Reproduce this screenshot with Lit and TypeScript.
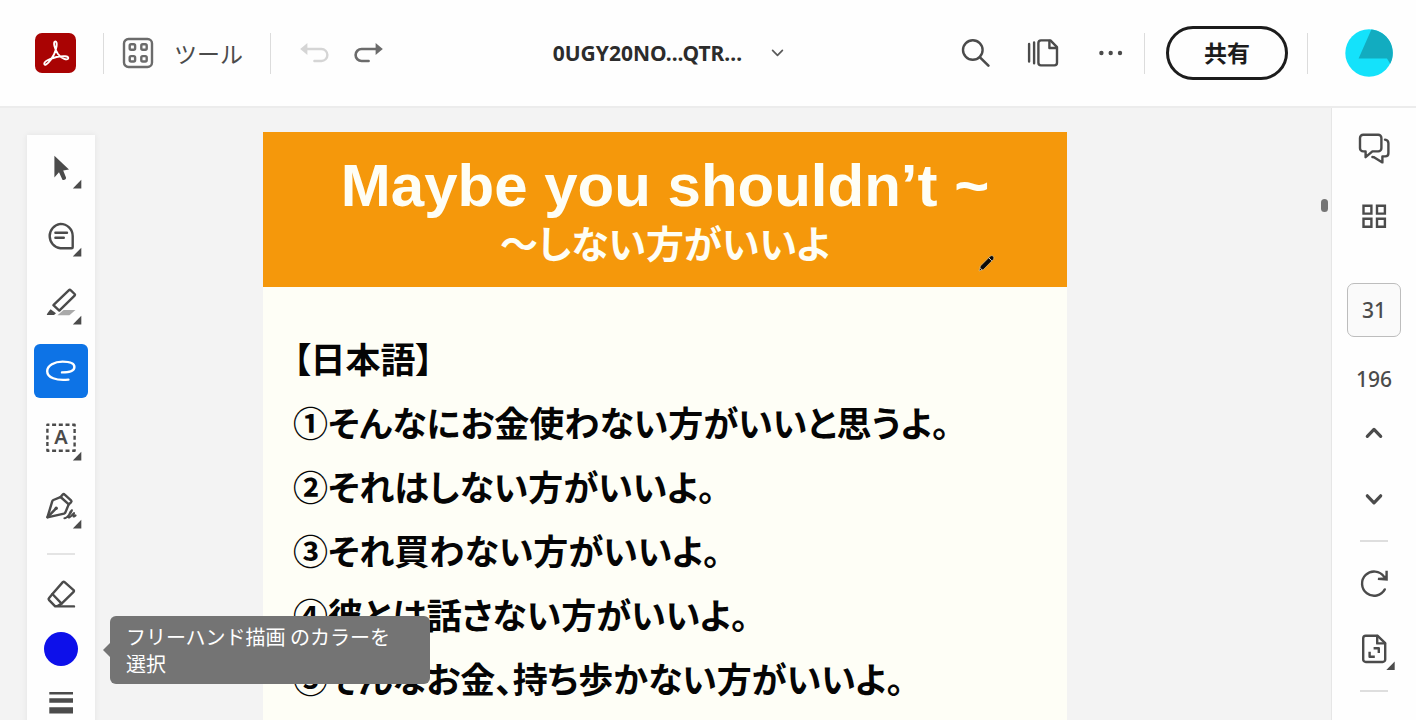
import { LitElement, html, svg, css } from "lit";
import { customElement, state } from "lit/decorators.js";
import { classMap } from "lit/directives/class-map.js";

const corner = svg`<path class="solid" d="M47.3 39.8V48.4H38.8Z"/>`;

const glyphs: Record<string, unknown> = {
  select: svg`<path class="solid" d="M20.4 15.8 35 29.6 29.2 30.4 32 37.6Q32.4 38.8 31.2 39.4L29.8 40Q28.6 40.4 28.2 39.2L25 32.2 20.4 37.4Z"/>${corner}`,
  comment: svg`<path d="M26.4 15.9A12.3 12.3 0 0 0 26.4 40.3H37.6A1.1 1.1 0 0 0 38.7 39.2V28.1A12.3 12.3 0 0 0 26.4 15.9Z"/><path d="M21.4 24.8H33M21.4 29.8H29.8"/>${corner}`,
  highlight: svg`<path d="M35 14.2Q35.8 13.4 36.6 14.2L40.6 18Q41.4 18.8 40.6 19.6L25.3 34.6 19.4 29.2Z"/><path class="solid" d="M12.8 39Q12.6 37.8 16.6 33.2L22 37.2 20 39Z"/><path class="pale" d="M29.6 34H41.5L35.4 39.2H23.4Z"/>${corner}`,
  draw: svg`<path d="M34.4 35.6C22 37 13.2 33.4 13.2 27.2C13.2 21.4 20.5 17.6 28.6 17.6C35.8 17.6 40.4 19.6 40.4 22.9C40.4 26.6 35 28.4 28 28.4"/>`,
  textbox: svg`<rect x="13.4" y="12.8" width="27.2" height="26" stroke-dasharray="4 2.7" stroke-linecap="butt" stroke-dashoffset="2"/><text x="27" y="32" text-anchor="middle">A</text>${corner}`,
  sign: svg`<path d="M28.7 14.6Q29.7 13.6 30.7 14.6L37 20.4Q38 21.4 37 22.4L34.8 24.4 26.6 17Z"/><path d="M26.4 17.2 19.4 20Q18.6 20.4 18.3 21.2L13.4 37.4 30 33.6Q31 33.2 31.4 32.4L34.6 24.6"/><path d="M13.6 37.2 21.6 28.8"/><circle class="solid" cx="22.2" cy="28.2" r="1.7"/><path stroke-width="2" d="M30.4 38.2C34 38.2 38.6 30 37.8 30.2C36 31.6 33.4 38 35.2 37.6C37.4 36.8 40.4 31.8 40 33.4C39.2 36 38.8 38 41.6 35.4"/>${corner}`,
  erase: svg`<path d="M28.8 14.1Q29.7 13.3 30.6 14.1L39.6 22.2Q40.4 23 39.6 23.8L27.6 35.6 18.4 26Z"/><path d="M18.4 26 14.9 30.2Q14.2 31 14.9 31.8L21.2 38.3H23.2L27.6 35.6M21.4 38.4H40"/>`,
  lines: svg`<path class="solid" d="M15.3 16H39V18.4H15.3ZM15.3 22.3H39V26.7H15.3ZM15.3 31.3H39V37.4H15.3Z"/>`,
  chat: svg`<path d="M16.2 13.7H31.2A3.2 3.2 0 0 1 34.4 16.9V27.2A3.2 3.2 0 0 1 31.2 30.4H25.4L18.6 36.2V30.4H16.2A3.2 3.2 0 0 1 13 27.2V16.9A3.2 3.2 0 0 1 16.2 13.7Z"/><path d="M38 18.6Q41.4 19 41.4 22.2V32.2Q41.4 35.4 38.2 35.4H35.4V41.4L27.4 36.4Q26.6 36 25.4 36"/>`,
  thumbs: svg`<path stroke-linejoin="miter" d="M16.5 16.7H24.4V24.6H16.5ZM30 16.7H37.9V24.6H30ZM16.5 29.8H24.4V37.7H16.5ZM30 29.8H37.9V37.7H30Z"/>`,
  up: svg`<path class="bold" d="M20.3 30.4 27 23.4 33.7 30.4"/>`,
  down: svg`<path class="bold" d="M20.3 23.8 27 30.8 33.7 23.8"/>`,
  rotate: svg`<path d="M37.8 33.4A12.1 12.1 0 1 1 37 20.6"/><path class="solid" d="M38.4 14.8H40.8V24.8L30.8 24 31 21.8 36.2 21.6 38.4 19.4Z"/>`,
  fit: svg`<path d="M18.8 13.7H30.4L38.2 21.2V37.4A2.6 2.6 0 0 1 35.6 40H18.8A2.6 2.6 0 0 1 16.2 37.4V16.3A2.6 2.6 0 0 1 18.8 13.7Z"/><path d="M30.2 14V21.4H38"/><path stroke-linecap="butt" d="M26.6 26.2H31.8V31M22.6 29.8V34.8H27.8"/><path class="solid" d="M47.7 39.6V48H39.3Z"/>`,
};

const glyph = (name: string) => html`<svg class="glyph" viewBox="0 0 54 54" aria-hidden="true">${glyphs[name]}</svg>`;

const sharedIcon = css`
  * { box-sizing: border-box; }
  button {
    font: inherit;
    color: inherit;
    background: none;
    border: 0;
    padding: 0;
    margin: 0;
    cursor: pointer;
  }
  svg { display: block; flex: none; fill: none; stroke: currentColor; stroke-width: 2.4; stroke-linecap: round; stroke-linejoin: round; }
  .glyph { width: 54px; height: 54px; }
  .solid { fill: currentColor; stroke: none; }
  .pale { fill: #a9a9a9; stroke: none; }
  .bold { stroke-width: 3.2; }
  text { fill: currentColor; stroke: none; font: 600 20px "Noto Sans", sans-serif; }
`;

@customElement("top-bar")
class TopBar extends LitElement {
  static styles = [sharedIcon, css`
    :host {
      display: flex;
      align-items: center;
      justify-content: space-between;
      height: 108px;
      padding: 0 23px 0 35px;
      background: #fefefe;
      border-bottom: 2px solid #ececec;
      color: #4b4b4b;
      font-family: "Noto Sans", "Noto Sans CJK JP", sans-serif;
    }
    .group { display: flex; align-items: center; }
    .rule { width: 1px; height: 41px; margin-right: 1px; background: #dcdcdc; }
    .tools { display: flex; align-items: center; gap: 20px; font-size: 23px; line-height: 32px; margin: 0 27px 0 17px; }
    .tools svg { color: #6b6b6b; }
    .label { font-family: "Noto Sans CJK JP", sans-serif; font-weight: 400; }
    .logo { margin-right: 27px; }
    .undo { color: #d5d5d5; margin: 0 25px 0 28px; }
    .redo { color: #6b6b6b; }
    .doc { display: flex; align-items: center; gap: 29px; margin-right: 7px; color: #2c2c2c; font-size: 21px; line-height: 32px; font-weight: 700; }
    .search { margin-right: 37px; }
    .pages { margin-right: 39px; }
    .more { margin-right: 21px; }
    .share {
      margin: 0 19px 0 20px;
      width: 122px;
      height: 54px;
      padding-bottom: 2px;
      border: 3px solid #1c1c1c;
      border-radius: 27px;
      color: #1c1c1c;
      font: 700 23px/32px "Noto Sans CJK JP", sans-serif;
    }
    .avatar { margin-left: 36px; }
  `];

  render() {
    return html`
      <div class="group">
        <button class="logo" aria-label="Adobe Acrobat">
          <svg width="41" height="40" viewBox="0 0 41 40">
            <rect width="41" height="40" rx="7" fill="#a90303" stroke="none"/>
            <path stroke="#fff" stroke-width="1.9" d="M9.4 31.2C8.4 28.6 14.6 25.6 21.6 24C28 22.6 34 22.8 33.2 25.4C32.4 27.6 26.8 26 23 21C20 16.8 17.6 8.8 20.2 8.4C23 8.6 21.6 16 18.8 21.8C15.6 28 10.6 33.4 9.4 31.2Z"/>
          </svg>
        </button>
        <span class="rule"></span>
        <button class="tools">
          <svg width="32" height="32" viewBox="0 0 32 32">
            <rect x="2" y="2" width="28" height="28" rx="4.5"/>
            <rect x="7.7" y="7.3" width="5.4" height="5.4" rx="1.4"/>
            <rect x="19.3" y="7.3" width="5.4" height="5.4" rx="1.4"/>
            <rect x="7.7" y="19.1" width="5.4" height="5.4" rx="1.4"/>
            <rect x="19.3" y="19.1" width="5.4" height="5.4" rx="1.4"/>
          </svg>
          <span class="label">ツール</span>
        </button>
        <span class="rule"></span>
        <button class="undo" aria-label="元に戻す">
          <svg width="29" height="20" viewBox="0 0 29 20">
            <path d="M7 6H21.4A6 6 0 0 1 21.4 18H14.4"/><path class="solid" d="M.2 6 7.4 0V12Z"/>
          </svg>
        </button>
        <button class="redo" aria-label="やり直し">
          <svg width="29" height="20" viewBox="0 0 29 20">
            <path stroke-width="2.6" d="M22 6H7.6A6 6 0 0 0 7.6 18H14.6"/><path class="solid" d="M28.8 6 21.6 0V12Z"/>
          </svg>
        </button>
      </div>
      <button class="doc">
        <span>0UGY20NO...QTR…</span>
        <svg width="13" height="8" viewBox="0 0 13 8"><path stroke="#5a5a5a" stroke-width="1.7" d="M1.6 1.4 6.5 6.3 11.4 1.4"/></svg>
      </button>
      <div class="group">
        <button class="search" aria-label="検索">
          <svg width="29" height="28" viewBox="0 0 29 28"><circle cx="11.8" cy="11" r="9.8"/><path stroke-width="2.6" d="M19 18.4 27.4 26.6"/></svg>
        </button>
        <button class="pages" aria-label="ページ">
          <svg width="32" height="28" viewBox="0 0 32 28">
            <path d="M2.1 5V22.6M7.1 3.4V24.2"/>
            <path d="M14 1.4H23.4L30 8.2V23.8A2.6 2.6 0 0 1 27.4 26.4H14A2.6 2.6 0 0 1 11.4 23.8V4A2.6 2.6 0 0 1 14 1.4Z"/>
            <path d="M22.4 2V9H29.6"/>
          </svg>
        </button>
        <button class="more" aria-label="その他">
          <svg width="25" height="6" viewBox="0 0 25 6"><g class="solid"><circle cx="3.4" cy="3" r="2.2"/><circle cx="12.7" cy="3" r="2.2"/><circle cx="22" cy="3" r="2.2"/></g></svg>
        </button>
        <span class="rule"></span>
        <button class="share">共有</button>
        <span class="rule"></span>
        <button class="avatar" aria-label="アカウント">
          <svg width="48" height="48" viewBox="0 0 48 48" stroke="none">
            <circle cx="24" cy="24" r="23.7" fill="#14e2fb" stroke="none"/>
            <path fill="#12acc0" stroke="none" d="M26.4.4A23.7 23.7 0 0 1 45.2 34.8L42 29.4H13.6Z"/>
          </svg>
        </button>
      </div>`;
  }
}

@customElement("tool-rail")
class ToolRail extends LitElement {
  @state() active = "draw";

  tools: [string, string][] = [
    ["select", "選択"],
    ["comment", "コメントを追加"],
    ["highlight", "ハイライト"],
    ["draw", "フリーハンド描画"],
    ["textbox", "テキストを追加"],
    ["sign", "署名"],
  ];

  static styles = [sharedIcon, css`
    :host {
      display: flex;
      flex-direction: column;
      align-items: center;
      width: 68px;
      padding-top: 5px;
      background: #fefefe;
      box-shadow: 0 0 6px rgba(0, 0, 0, .07);
      color: #4b4b4b;
      z-index: 1;
    }
    .tools { display: flex; flex-direction: column; gap: 14px; }
    button { width: 54px; height: 54px; border-radius: 6px; display: flex; align-items: center; justify-content: center; }
    .active { background: #0d73e6; color: #fff; }
    .rule { width: 28px; height: 2px; margin: 19px 0 13px; background: #e4e4e4; }
    .colour { position: relative; }
    .dot { width: 34px; height: 34px; border-radius: 50%; background: #0d10ea; }
    .tip {
      position: absolute;
      left: 76px;
      top: -6px;
      width: 320px;
      padding: 7px 32px 7px 16px;
      border-radius: 6px;
      background: #747474;
      color: #fff;
      font: 400 20px/27px "Noto Sans CJK JP", sans-serif;
    }
    .tip::before {
      content: "";
      position: absolute;
      left: -7px;
      top: 27px;
      border: solid transparent;
      border-width: 7px 7px 7px 0;
      border-right-color: #747474;
    }
  `];

  render() {
    return html`
      <div class="tools">
        ${this.tools.map(([name, label]) => html`
          <button class=${classMap({ active: this.active === name })} aria-label=${label}
            @click=${() => (this.active = name)}>${glyph(name)}</button>`)}
      </div>
      <div class="rule"></div>
      <button aria-label="消しゴム">${glyph("erase")}</button>
      <div class="colour">
        <button aria-describedby="tip" aria-label="カラー"><span class="dot"></span></button>
        <div class="tip" id="tip" role="tooltip">フリーハンド描画 のカラーを選択</div>
      </div>
      <button aria-label="線の太さ">${glyph("lines")}</button>`;
  }
}

@customElement("page-rail")
class PageRail extends LitElement {
  static styles = [sharedIcon, css`
    :host {
      display: flex;
      flex-direction: column;
      align-items: center;
      width: 85px;
      padding-top: 13px;
      background: #fefefe;
      border-left: 1px solid #e6e6e6;
      color: #4b4b4b;
      font: 500 21px/54px "Noto Sans", sans-serif;
    }
    .views { display: flex; flex-direction: column; gap: 14px; margin-bottom: 40px; }
    input {
      width: 54px;
      height: 54px;
      border: 1px solid #bdbdbd;
      border-radius: 7px;
      background: #fafafa;
      color: inherit;
      font: inherit;
      line-height: 32px;
      text-align: center;
      padding: 0;
    }
    .total { margin-top: 15px; }
    .steps { display: flex; flex-direction: column; gap: 12px; }
    .rule { width: 28px; height: 2px; margin: 14px 0; background: #dedede; }
    .page { display: flex; flex-direction: column; gap: 12px; }
  `];

  render() {
    return html`
      <div class="views">
        <button aria-label="コメント">${glyph("chat")}</button>
        <button aria-label="ページサムネール">${glyph("thumbs")}</button>
      </div>
      <input type="text" aria-label="ページ番号" value="31">
      <span class="total">196</span>
      <div class="steps">
        <button aria-label="前のページ">${glyph("up")}</button>
        <button aria-label="次のページ">${glyph("down")}</button>
      </div>
      <div class="rule"></div>
      <div class="page">
        <button aria-label="回転">${glyph("rotate")}</button>
        <button aria-label="ページに合わせる">${glyph("fit")}</button>
      </div>
      <div class="rule"></div>`;
  }
}

@customElement("app-root")
class AppRoot extends LitElement {
  lines = [
    "【日本語】",
    "①そんなにお金使わない方がいいと思うよ。",
    "②それはしない方がいいよ。",
    "③それ買わない方がいいよ。",
    "④彼とは話さない方がいいよ。",
    "⑤そんなお金、持ち歩かない方がいいよ。",
  ];

  static styles = css`
    * { box-sizing: border-box; }
    :host { display: flex; flex-direction: column; height: 100vh; overflow: hidden; background: #f3f3f3; }
    top-bar { flex: none; }
    .main { flex: 1; display: flex; min-height: 0; }
    .canvas {
      flex: 1;
      min-width: 0;
      display: grid;
      grid-template-columns: 1fr minmax(0, 804px) 1fr;
      align-items: start;
      padding-right: 1px;
      overflow: hidden;
    }
    tool-rail { margin: 27px 0 0 27px; }
    .sheet { margin-top: 24px; background: #fefef6; min-height: 900px; }
    .banner {
      position: relative;
      height: 155px;
      padding-top: 21px;
      background: #f5980b;
      color: #fefef6;
      text-align: center;
      font-family: "Liberation Sans", "Noto Sans CJK JP", sans-serif;
      font-weight: 700;
    }
    h1 { margin: 0; font-size: 60px; line-height: 66px; font-weight: 700; white-space: nowrap; }
    h2 { margin: 0; font: 700 38px/46px "Noto Sans CJK JP", sans-serif; font-feature-settings: "palt"; white-space: nowrap; }
    .cursor { position: absolute; right: 72px; bottom: 15px; display: block; }
    .body {
      padding: 39px 30px;
      color: #050505;
      font: 700 35px/64px "Noto Sans CJK JP", sans-serif;
      font-feature-settings: "palt";
      white-space: nowrap;
    }
    p { margin: 0; }
    .thumb { justify-self: end; width: 7px; height: 13px; margin: 91px 2px 0 0; border-radius: 4px; background: #757575; }
  `;

  render() {
    return html`
      <top-bar></top-bar>
      <div class="main">
        <div class="canvas">
          <tool-rail></tool-rail>
          <article class="sheet">
            <header class="banner">
              <h1>Maybe you shouldn’t ~</h1>
              <h2>～しない方がいいよ</h2>
              <svg class="cursor" width="17" height="18" viewBox="0 0 17 18" aria-hidden="true">
                <path d="M1 17 2.4 12 12.4 2Q14 .8 15.4 2.4Q16.6 4 15.4 5.4L5.6 15.4Z" fill="#0a0a0a" stroke="#e9c88b" stroke-width=".7"/>
                <path d="M10.6 3.6 13.8 6.8M2.2 14 4 15.8" stroke="#d8d0c0" stroke-width="1"/>
              </svg>
            </header>
            <div class="body">${this.lines.map((l) => html`<p>${l}</p>`)}</div>
          </article>
          <div class="thumb"></div>
        </div>
        <page-rail></page-rail>
      </div>`;
  }
}
